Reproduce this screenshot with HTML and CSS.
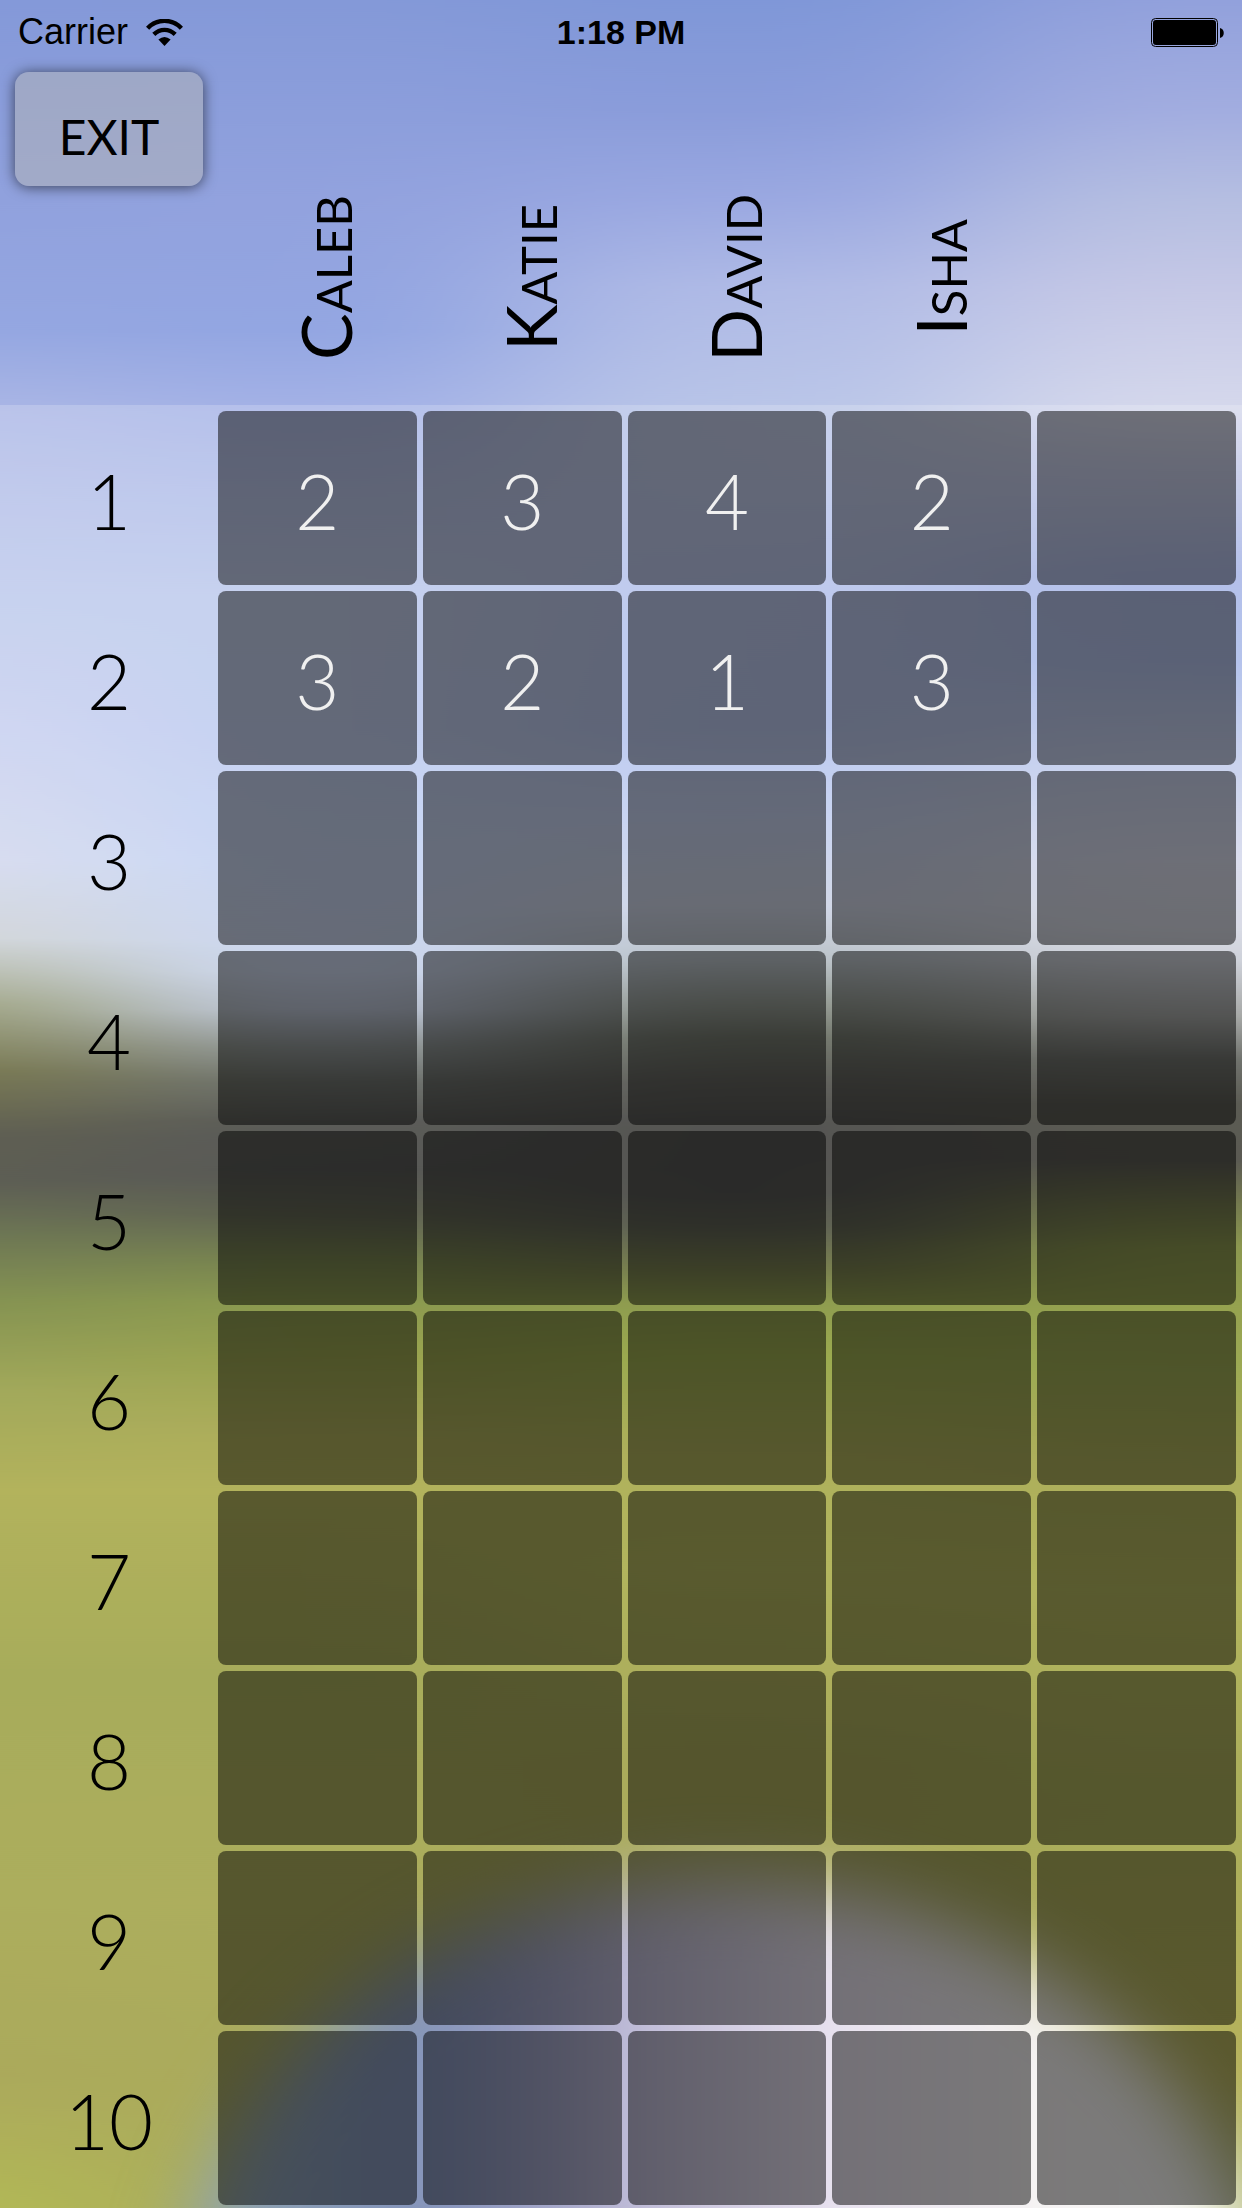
FILE: index.html
```html
<!DOCTYPE html>
<html lang="en">
<head>
<meta charset="utf-8">
<meta name="viewport" content="width=device-width, initial-scale=1">
<title>Score Card</title>
<link rel="stylesheet" href="styles.css">
</head>
<body>
<svg class="scene" viewBox="0 0 1242 2208" preserveAspectRatio="none" aria-hidden="true">
  <defs>
    <linearGradient id="far-left" gradientUnits="userSpaceOnUse" x1="0" y1="0" x2="0" y2="2208">
      <stop offset="0" stop-color="#8499d9"/><stop offset=".09" stop-color="#90a1dd"/><stop offset=".15" stop-color="#95a7e1"/>
      <stop offset=".185" stop-color="#aab6e5"/><stop offset=".22" stop-color="#b2bde8"/><stop offset=".27" stop-color="#bac7eb"/>
      <stop offset=".33" stop-color="#c5cdef"/><stop offset=".39" stop-color="#cfd5ec"/><stop offset=".425" stop-color="#c8cdd0"/>
      <stop offset=".455" stop-color="#8c926a"/><stop offset=".485" stop-color="#595927"/><stop offset=".515" stop-color="#373727"/>
      <stop offset=".535" stop-color="#35362a"/><stop offset=".56" stop-color="#4a562a"/><stop offset=".59" stop-color="#677827"/>
      <stop offset=".63" stop-color="#8b9433"/><stop offset=".675" stop-color="#a0a034"/><stop offset=".76" stop-color="#929833"/>
      <stop offset=".86" stop-color="#989a35"/><stop offset=".94" stop-color="#979433"/><stop offset="1" stop-color="#a0a82c"/>
    </linearGradient>
    <linearGradient id="left" gradientUnits="userSpaceOnUse" x1="0" y1="0" x2="0" y2="2208">
      <stop offset="0" stop-color="#8499d8"/><stop offset=".09" stop-color="#92a2de"/><stop offset=".15" stop-color="#93a6e2"/>
      <stop offset=".185" stop-color="#a3b1e6"/><stop offset=".22" stop-color="#adbbe9"/><stop offset=".27" stop-color="#b9c7eb"/>
      <stop offset=".33" stop-color="#b8c7ef"/><stop offset=".39" stop-color="#bdcef2"/><stop offset=".44" stop-color="#c2cfed"/>
      <stop offset=".457" stop-color="#b0bad2"/><stop offset=".474" stop-color="#798183"/><stop offset=".49" stop-color="#4d524d"/>
      <stop offset=".508" stop-color="#333430"/><stop offset=".53" stop-color="#2f302c"/><stop offset=".55" stop-color="#3c4029"/>
      <stop offset=".57" stop-color="#566524"/><stop offset=".59" stop-color="#6f8124"/><stop offset=".615" stop-color="#818d24"/>
      <stop offset=".65" stop-color="#9a9a33"/><stop offset=".675" stop-color="#a0a034"/><stop offset=".76" stop-color="#929833"/>
      <stop offset=".86" stop-color="#999a35"/><stop offset="1" stop-color="#959633"/>
    </linearGradient>
    <linearGradient id="right" gradientUnits="userSpaceOnUse" x1="0" y1="0" x2="0" y2="2208">
      <stop offset="0" stop-color="#7f97d8"/><stop offset=".05" stop-color="#8a9cda"/><stop offset=".09" stop-color="#9aa8e1"/>
      <stop offset=".13" stop-color="#afbae6"/><stop offset=".185" stop-color="#b9c5e8"/><stop offset=".22" stop-color="#b7c3ea"/>
      <stop offset=".27" stop-color="#afbdea"/><stop offset=".33" stop-color="#acbcec"/><stop offset=".37" stop-color="#bccaef"/>
      <stop offset=".41" stop-color="#c6cde2"/><stop offset=".435" stop-color="#a9b3ba"/><stop offset=".455" stop-color="#798177"/>
      <stop offset=".47" stop-color="#515749"/><stop offset=".49" stop-color="#3a3a34"/><stop offset=".51" stop-color="#2b2b28"/>
      <stop offset=".54" stop-color="#2b2b28"/><stop offset=".555" stop-color="#353829"/><stop offset=".575" stop-color="#565e24"/>
      <stop offset=".59" stop-color="#738424"/><stop offset=".615" stop-color="#839624"/><stop offset=".66" stop-color="#9b9d33"/>
      <stop offset=".71" stop-color="#a0a436"/><stop offset=".8" stop-color="#959633"/><stop offset="1" stop-color="#9a9a33"/>
    </linearGradient>
    <linearGradient id="far-right" gradientUnits="userSpaceOnUse" x1="0" y1="0" x2="0" y2="2208">
      <stop offset="0" stop-color="#92a1dc"/><stop offset=".05" stop-color="#a2ade0"/><stop offset=".09" stop-color="#b5bee1"/>
      <stop offset=".13" stop-color="#c5c8e6"/><stop offset=".185" stop-color="#d5d8ec"/><stop offset=".21" stop-color="#c2c8e8"/>
      <stop offset=".26" stop-color="#a2b1e5"/><stop offset=".3" stop-color="#a3b5e8"/><stop offset=".34" stop-color="#bbc7ea"/>
      <stop offset=".39" stop-color="#d2d6ea"/><stop offset=".42" stop-color="#d0d3e0"/><stop offset=".435" stop-color="#c3c7d1"/>
      <stop offset=".46" stop-color="#929492"/><stop offset=".48" stop-color="#4d504a"/><stop offset=".5" stop-color="#333329"/>
      <stop offset=".525" stop-color="#323128"/><stop offset=".545" stop-color="#525924"/><stop offset=".565" stop-color="#6f7e24"/>
      <stop offset=".59" stop-color="#7b8b24"/><stop offset=".62" stop-color="#85952a"/><stop offset=".66" stop-color="#979a31"/>
      <stop offset=".72" stop-color="#a1a436"/><stop offset=".82" stop-color="#969a33"/><stop offset=".94" stop-color="#a5a034"/>
      <stop offset="1" stop-color="#9aa44a"/>
    </linearGradient>
    <linearGradient id="orb-fill" gradientUnits="userSpaceOnUse" x1="160" y1="0" x2="1260" y2="0">
      <stop offset="0" stop-color="#7793a0"/><stop offset=".24" stop-color="#6478aa"/><stop offset=".34" stop-color="#878cb9"/>
      <stop offset=".43" stop-color="#b0abce"/><stop offset=".61" stop-color="#e3dbec"/><stop offset=".8" stop-color="#f4f1f1"/>
      <stop offset="1" stop-color="#f8f8f8"/>
    </linearGradient>
    <filter id="spread" filterUnits="userSpaceOnUse" x="-400" y="0" width="2042" height="2208" color-interpolation-filters="sRGB">
      <feGaussianBlur stdDeviation="110 0"/>
    </filter>
    <filter id="soften" filterUnits="userSpaceOnUse" x="0" y="1700" width="1442" height="1200" color-interpolation-filters="sRGB">
      <feGaussianBlur stdDeviation="36"/>
    </filter>
  </defs>
  <g filter="url(#spread)">
    <rect x="-400" width="530" height="2208" fill="url(#far-left)"/>
    <rect x="130" width="400" height="2208" fill="url(#left)"/>
    <rect x="530" width="450" height="2208" fill="url(#right)"/>
    <rect x="980" width="662" height="2208" fill="url(#far-right)"/>
  </g>
  <ellipse cx="720" cy="2350" rx="545" ry="468" fill="url(#orb-fill)" filter="url(#soften)"/>
</svg>

<div class="page">
  <header class="status">
    <div class="status-left">
      <span>Carrier</span>
      <svg class="wifi" viewBox="0 0 37 27" role="img" aria-label="Wi-Fi">
        <g fill="none" stroke="#000" stroke-width="4.4">
          <path d="M1.6 9.2C11 -.6 26 -.6 35.4 9.2"/>
          <path d="M7.8 15.4C14 9.4 23 9.4 29.2 15.4"/>
        </g>
        <path d="M12.4 20.6Q18.5 15.4 24.6 20.6L18.5 27Z"/>
      </svg>
    </div>
    <time class="clock">1:18 PM</time>
    <div class="status-right">
      <svg class="battery" viewBox="0 0 73 29" role="img" aria-label="Battery full">
        <rect x=".5" y=".5" width="66" height="28" rx="4" fill="none" stroke="#000"/>
        <rect x="2" y="2" width="63" height="25" rx="3"/>
        <path d="M69 10c5 1 5 9 0 10z"/>
      </svg>
    </div>
  </header>
  <nav class="toolbar"><button class="exit" type="button">EXIT</button></nav>

  <table class="scores">
    <thead>
      <tr><td></td><th scope="col"><span class="name">Caleb</span></th><th scope="col"><span class="name">Katie</span></th><th scope="col"><span class="name">David</span></th><th scope="col"><span class="name">Isha</span></th><td></td></tr>
    </thead>
    <tbody>
      <tr><th scope="row">1</th><td>2</td><td>3</td><td>4</td><td>2</td><td></td></tr>
      <tr><th scope="row">2</th><td>3</td><td>2</td><td>1</td><td>3</td><td></td></tr>
      <tr><th scope="row">3</th><td></td><td></td><td></td><td></td><td></td></tr>
      <tr><th scope="row">4</th><td></td><td></td><td></td><td></td><td></td></tr>
      <tr><th scope="row">5</th><td></td><td></td><td></td><td></td><td></td></tr>
      <tr><th scope="row">6</th><td></td><td></td><td></td><td></td><td></td></tr>
      <tr><th scope="row">7</th><td></td><td></td><td></td><td></td><td></td></tr>
      <tr><th scope="row">8</th><td></td><td></td><td></td><td></td><td></td></tr>
      <tr><th scope="row">9</th><td></td><td></td><td></td><td></td><td></td></tr>
      <tr><th scope="row">10</th><td></td><td></td><td></td><td></td><td></td></tr>
    </tbody>
  </table>
</div>
</body>
</html>
```
FILE: styles.css
```css
* { box-sizing: border-box; }

body {
  margin: 0;
  position: relative;
  color: #000;
  font-family: Lato, "Open Sans", sans-serif;
  font-weight: 300;
}

/* Blurred landscape behind everything */
.scene {
  position: absolute;
  inset: 0;
  width: 100%;
  height: 100%;
  z-index: -1;
}

.page {
  display: flex;
  flex-direction: column;
  min-height: 100vh;
}

/* Status bar */
.status {
  display: grid;
  grid-template-columns: 1fr auto 1fr;
  align-items: center;
  height: 64px;
  padding: 0 18px;
  font: 36px/62px "Liberation Sans", Arial, sans-serif;
}
.status-left { display: flex; align-items: center; gap: 18px; }
.status-right { display: flex; justify-content: flex-end; }
.clock { font-size: 34px; font-weight: 700; }
.wifi { width: 37px; height: 27px; }
.battery { width: 73px; height: 29px; }

/* Exit button */
.toolbar { padding: 8px 15px 0; }
.exit {
  display: block;
  width: 188px;
  height: 114px;
  padding: 16px 0 0;
  border: 0;
  border-radius: 14px;
  background: rgba(180, 180, 180, .5);
  box-shadow: 0 1px 14px rgba(0, 0, 0, .6);
  color: #000;
  font: 400 48px/1 Lato, "Open Sans", sans-serif;
}

/* Score grid */
.scores {
  flex: 1;
  display: flex;
  flex-direction: column;
}
.scores thead { padding-bottom: 36px; }
.scores tr {
  display: grid;
  grid-template-columns: 206px repeat(5, minmax(0, 1fr));
  gap: 6px;
  padding: 0 6px;
}
.scores thead, .scores tbody { display: block; }
.scores thead tr { height: 183px; }
.scores th, .scores td {
  display: flex;
  align-items: center;
  justify-content: center;
  padding: 0;
  font-size: 76px;
  font-weight: 300;
  line-height: 1;
}
.scores thead th { padding-left: 16px; }
.name {
  font-size: 70px;
  font-weight: 400;
  font-variant-caps: small-caps;
  writing-mode: vertical-rl;
  transform: rotate(180deg);
}
.scores tbody {
  flex: 1;
  display: flex;
  flex-direction: column;
  gap: 6px;
  padding: 6px 0 3px;
  background: rgba(255, 255, 255, .2);
}
.scores tbody tr { flex: 1 0 96px; }
.scores tbody th, .scores tbody td { padding-top: 6px; }
.scores tbody td {
  border-radius: 8px;
  background: rgba(0, 0, 0, .5);
  color: #f0f0f0;
}
```
